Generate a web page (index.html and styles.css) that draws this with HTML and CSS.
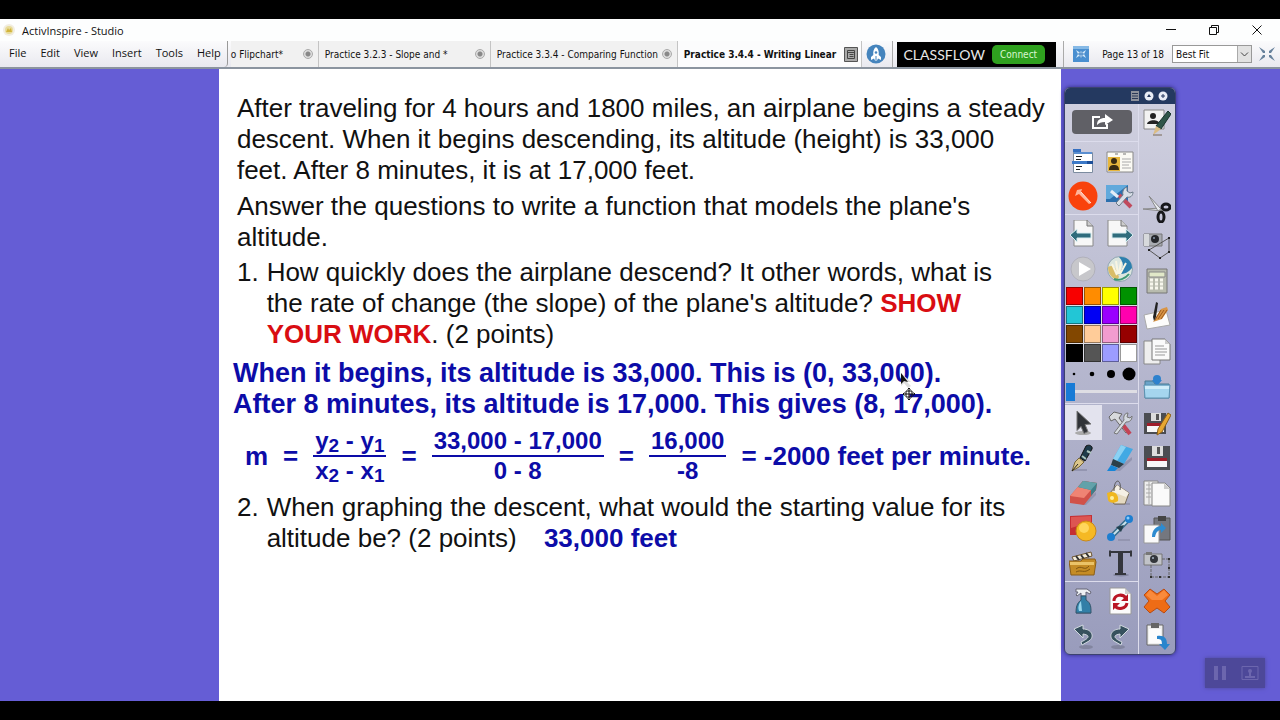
FILE: index.html
```html
<!DOCTYPE html>
<html lang="en">
<head>
    <meta charset="UTF-8">
    <meta name="viewport" content="width=device-width, initial-scale=1.0">
    <title>ActivInspire - Studio</title>
    <link rel="stylesheet" href="styles.css">
</head>
<body>
    <header class="titlebar">
        <svg class="app-logo" viewBox="0 0 14 14"><circle cx="7" cy="7" r="6" fill="#f1ede0"/><circle cx="7" cy="7" r="4" fill="#e8dc9a"/><path d="M4 9l2-4 1 2 2-2 1 4z" fill="#d2b43c"/></svg>
        <h1>ActivInspire - Studio</h1>
        <div class="window-buttons">
            <button aria-label="Minimize"><svg viewBox="0 0 12 12"><path d="M1 5.500h10" stroke="#111" fill="none"/></svg></button>
            <button aria-label="Restore"><svg viewBox="0 0 12 12"><path d="M1.500 3.500h7v7h-7zM3.500 3.500v-2h7v7h-2" stroke="#111" fill="none"/></svg></button>
            <button aria-label="Close"><svg viewBox="0 0 12 12"><path d="M1.500 1.500l9 9M10.500 1.500l-9 9" stroke="#111" fill="none"/></svg></button>
        </div>
    </header>

    <div class="toolbar">
        <nav class="menu">
            <button>File</button>
            <button>Edit</button>
            <button>View</button>
            <button>Insert</button>
            <button>Tools</button>
            <button>Help</button>
        </nav>
        <div class="tabs">
            <div class="tab tab-first"><a href="#">o Flipchart*</a><button class="tab-close" aria-label="Close tab"></button></div>
            <div class="tab tab-mid"><a href="#">Practice 3.2.3 - Slope and *</a><button class="tab-close" aria-label="Close tab"></button></div>
            <div class="tab tab-wide"><a href="#">Practice 3.3.4 - Comparing Function</a><button class="tab-close" aria-label="Close tab"></button></div>
            <div class="tab tab-active"><a href="#">Practice 3.4.4 - Writing Linear</a>
                <button class="tab-list" aria-label="Open flipcharts"><svg viewBox="0 0 14 15"><path d="M.5.5h13v14H.5z" fill="#a9a9a9" stroke="#555"/><path d="M3.500 3.500h7v8h-7zM4 5.500h6M5.500 7.500h4M5.500 9.500h4" fill="none" stroke="#444"/></svg></button>
            </div>
        </div>
        <button class="rocket" aria-label="Launch"><svg viewBox="0 0 20 20"><circle cx="10" cy="10" r="9.500" fill="#4584bd"/><path d="M10 3c2.500 2 3 4.500 2.700 8l2.300 2v3l-3-1.500-1 2h-2l-1-2L5 16v-3l2.300-2C7 7.500 7.500 5 10 3z" fill="#fff"/><circle cx="10" cy="8.500" r="1.300" fill="#4584bd"/><path d="M10 12v4" stroke="#4584bd"/></svg></button>
        <div class="classflow">
            <span>CLASSFLOW</span>
            <button>Connect</button>
        </div>
        <div class="page-tools">
            <button class="page-icon" aria-label="Page browser"><svg viewBox="0 0 16 16"><path d="M0 0h16v16H0z" fill="#4a8fd0"/><path d="M0 0h16v3H0z" fill="#86b9e6"/><path d="M3 4l3 2 2-1 2 1 3-2-2 4 2 4-3-2-2 2-2-2-3 2 2-4z" fill="#d8ecfb"/><path d="M7 5v7M9 5v7M5 8h6" stroke="#3d7fc0"/></svg></button>
            <span>Page 13 of 18</span>
            <label class="zoom">
                <select aria-label="Zoom"><option>Best Fit</option></select>
                <svg viewBox="0 0 14 16"><path d="M0 0h14v16H0z" fill="#e2e2e2"/><path d="M.5 0v16" stroke="#aaa"/><path d="M4 6.500l3.500 3.500L11 6.500" stroke="#444" fill="none"/></svg>
            </label>
            <button class="full-icon" aria-label="Exit full screen"><svg viewBox="0 0 16 16"><path d="M0 1l6 4v2H4zM16 1l-6 4v2h2zM0 15l6-4V9H4zM16 15l-6-4V9h2z" fill="#66809b"/></svg></button>
        </div>
    </div>

    <div class="workspace">
        <main class="flipchart">
            <p>After traveling for 4 hours and 1800 miles, an airplane begins a steady<br>descent. When it begins descending, its altitude (height) is 33,000<br>feet. After 8 minutes, it is at 17,000 feet.</p>
            <p>Answer the questions to write a function that models the plane's<br>altitude.</p>
            <div class="question">
                <span>1.</span>
                <p>How quickly does the airplane descend? It other words, what is<br>the rate of change (the slope) of the plane's altitude? <strong>SHOW<br>YOUR WORK</strong>. (2 points)</p>
            </div>
            <div class="answer">
                When it begins, its altitude is 33,000. This is (0, 33,000).<br>After 8 minutes, its altitude is 17,000. This gives (8, 17,000).
                <svg class="pointer" viewBox="0 0 18 28"><path d="M1 1v13l3-3 4 5 3-2-4-4h4z" fill="#ddd"/><path d="M1 1v11l3-3 4 1z" fill="#111"/><path d="M9 16v12M3 22h12M7.500 17.500L9 16l1.500 1.500M7.500 26.500L9 28l1.500-1.500M4.500 20.500L3 22l1.500 1.500M13.500 20.500L15 22l-1.500 1.500M6 19h6v6H6z" fill="none" stroke="#111"/></svg>
            </div>
            <div class="equation">
                <span>m</span>
                <span>=</span>
                <span class="fraction"><span>y<sub>2</sub> - y<sub>1</sub></span><span>x<sub>2</sub> - x<sub>1</sub></span></span>
                <span>=</span>
                <span class="fraction"><span>33,000 - 17,000</span><span>0 - 8</span></span>
                <span>=</span>
                <span class="fraction"><span>16,000</span><span>-8</span></span>
                <span>= -2000 feet per minute.</span>
            </div>
            <div class="question">
                <span>2.</span>
                <p>When graphing the descent, what would the starting value for its<br>altitude be? (2 points) <b>33,000 feet</b></p>
            </div>
        </main>

        <aside class="toolbox">
            <div class="toolbox-head">
                <button aria-label="Menu"><svg viewBox="0 0 10 10"><path d="M1 0h8v10H1z" fill="#8d929c"/><path d="M2 2.500h6M2 5h6M2 7.500h6" stroke="#2b3a58"/></svg></button>
                <button aria-label="Roll up"><svg viewBox="0 0 10 10"><circle cx="5" cy="5" r="4.500" fill="#e9edf5"/><path d="M3 6l2-3 2 3z" fill="#24365c"/></svg></button>
                <button aria-label="Pin"><svg viewBox="0 0 10 10"><circle cx="5" cy="5" r="4.500" fill="#e9edf5"/><path d="M5 3v4M3 5h4" stroke="#24365c"/></svg></button>
            </div>
            <div class="toolbox-body">
                <div class="tools-main">
                    <button class="share" aria-label="Share"><svg viewBox="0 0 22 16"><path d="M9 3H2v11h14v-4" fill="none" stroke="#fff" stroke-width="2"/><path d="M6 11c0-5 3-7 8-7V0l8 6-8 5V8c-4 0-6 1-8 3z" fill="#fff"/></svg></button>
                    <div class="tool-group">
                        <button aria-label="Main menu"><svg viewBox="0 0 28 28"><path d="M4 2h8v4H4z" fill="#356fc0"/><path d="M4.500 5.500h19v20h-19z" fill="#fff" stroke="#7c8ca0"/><path d="M5 5h18v2H5z" fill="#5b8fd0"/><path d="M7 9.500h6M7 12.500h5M7 19.500h6M7 22.500h4" stroke="#222"/><path d="M3 14h21v3H3z" fill="#3c79c8"/><path d="M18 14h6v3h-6z" fill="#1c4f99"/></svg></button>
                        <button aria-label="Profiles"><svg viewBox="0 0 28 28"><path d="M1 5h26v20H1z" fill="#fbfaf4" stroke="#888"/><path d="M2 10h12v14H2z" fill="#e7b63c"/><circle cx="8" cy="14" r="3" fill="#3a2b13"/><path d="M3 23c0-4 2-5 5-5s5 1 5 5z" fill="#3a2b13"/><path d="M16 12h9M16 15h9M16 18h7M16 21h9" stroke="#aaa"/><path d="M9 7h3M17 7h3" stroke="#777"/></svg></button>
                        <button aria-label="Annotate over desktop" class="big"><svg viewBox="0 0 30 30"><circle cx="15" cy="15" r="14.500" fill="#f9420c"/><path d="M7 15l2-6 5-1-1 3 10 11-2 1-10-10z" fill="#ffb49a"/><path d="M13 11l10 11" stroke="#ffe4da"/></svg></button>
                        <button aria-label="Desktop tools"><svg viewBox="0 0 28 28"><path d="M0 3h22v17H0z" fill="#2c70ae"/><path d="M0 3h22L4 17H0z" fill="#61a9dc"/><path d="M13 13l12 12" stroke="#c04a5c" stroke-width="4"/><path d="M10 21l7-8c-1-4 1-7 4-8v4l3 2 3-1c0 4-3 6-6 5l-8 9z" fill="#d8dfe7" stroke="#6c7a88"/><path d="M5 9l7 6" stroke="#e4edf6" stroke-width="3"/></svg></button>
                    </div>
                    <div class="tool-group">
                        <button aria-label="Previous page"><svg viewBox="0 0 28 28"><path d="M5 0h13l6 6v20H5z" fill="#f7f7f7" stroke="#888"/><path d="M18 0v6h6" fill="#ccc" stroke="#777"/><path d="M1 15l7-6v4h14v5H8v4z" fill="#2f6c7c" stroke="#d8edf0"/></svg></button>
                        <button aria-label="Next page"><svg viewBox="0 0 28 28"><path d="M2 0h13l6 6v20H2z" fill="#f7f7f7" stroke="#888"/><path d="M15 0v6h6" fill="#ccc" stroke="#777"/><path d="M27 15l-7-6v4H6v5h14v4z" fill="#2f6c7c" stroke="#d8edf0"/></svg></button>
                        <button aria-label="Play"><svg viewBox="0 0 28 28"><circle cx="14" cy="14" r="12" fill="#c7c7cb" stroke="#b1b1bb"/><path d="M10 7l12 7-12 7z" fill="#fff"/></svg></button>
                        <button aria-label="Express poll"><svg viewBox="0 0 28 28"><circle cx="14" cy="14" r="12.500" fill="#dce6df" stroke="#8fa5b2"/><path d="M13 2c9-1 13 5 13 11-4 5-9 7-16 6 7-4 10-9 3-17z" fill="#2c7fae"/><path d="M2 12c5-3 8 0 11 10l-2 3c-6-2-9-7-9-13z" fill="#d9bd68"/><path d="M6 9l5 11M10 6l2 13M15 7l-2 12M20 8l-6 11" stroke="#f8f5e2" stroke-width="2"/><path d="M8 24c5 2 11 0 15-5" stroke="#3d9873" stroke-width="2" fill="none"/></svg></button>
                    </div>
                    <div class="palette">
                        <button class="c-red" aria-label="Red"></button><button class="c-orange" aria-label="Orange"></button><button class="c-yellow" aria-label="Yellow"></button><button class="c-green" aria-label="Green"></button>
                        <button class="c-cyan" aria-label="Cyan"></button><button class="c-blue" aria-label="Blue"></button><button class="c-purple" aria-label="Purple"></button><button class="c-pink" aria-label="Pink"></button>
                        <button class="c-brown" aria-label="Brown"></button><button class="c-peach" aria-label="Peach"></button><button class="c-rose" aria-label="Rose"></button><button class="c-maroon" aria-label="Maroon"></button>
                        <button class="c-black" aria-label="Black"></button><button class="c-grey" aria-label="Grey"></button><button class="c-lilac" aria-label="Lilac"></button><button class="c-white" aria-label="White"></button>
                    </div>
                    <div class="widths">
                        <button aria-label="Width 1"><svg viewBox="0 0 18 18"><circle cx="9" cy="9" r="1.300"/></svg></button>
                        <button aria-label="Width 2"><svg viewBox="0 0 18 18"><circle cx="9" cy="9" r="2.300"/></svg></button>
                        <button aria-label="Width 3"><svg viewBox="0 0 18 18"><circle cx="9" cy="9" r="4"/></svg></button>
                        <button aria-label="Width 4"><svg viewBox="0 0 18 18"><circle cx="9" cy="9" r="6.500"/></svg></button>
                    </div>
                    <input class="slider" type="range" min="0" max="100" value="0" aria-label="Pen width">
                    <div class="tool-group">
                        <button class="selected" aria-label="Select"><svg viewBox="0 0 28 28"><ellipse cx="14" cy="24" rx="8" ry="2" fill="#aaa"/><path d="M8 2l14 13-6 .5 3 7-4 2-3-7-4 4z" fill="#303338" stroke="#777"/></svg></button>
                        <button aria-label="Tools"><svg viewBox="0 0 28 28"><path d="M3 8l5-5 8 2-3 4 10 13-3 2L9 10l-4 2z" fill="#d7d9dc" stroke="#666"/><path d="M17 16l7 9" stroke="#c34355" stroke-width="4"/><path d="M8 24L18 11c-1-4 1-7 4-7l-1 4 3 1 2-2c0 5-3 6-6 6L11 25z" fill="#d5dae0" stroke="#777"/></svg></button>
                        <button aria-label="Pen"><svg viewBox="0 0 28 28"><path d="M4 26h14" stroke="#9395b0" stroke-width="2"/><path d="M17 2c3-2 7 0 6 3l-7 12-5-3z" fill="#1e3a4a" stroke="#111"/><path d="M18 7l4 2M13 12l4 3" stroke="#a9c3bd" stroke-width="2"/><path d="M10 14l5 4-5 5-7 4 3-9z" fill="#dbc58a" stroke="#756438"/><path d="M3 27l6-7" stroke="#222"/></svg></button>
                        <button aria-label="Highlighter"><svg viewBox="0 0 28 28"><path d="M8 26.500L26 13v3L14 27z" fill="#9395b0"/><path d="M15 1l12 4-9 15-11-5z" fill="#42a9e4"/><path d="M15 1l5 2-9 14-4-2z" fill="#8bd1f3"/><path d="M7 15l11 5-5 4-8-3z" fill="#2b3f4a"/><path d="M5 21l7 3-3 3H1z" fill="#1686d8"/></svg></button>
                        <button aria-label="Eraser"><svg viewBox="0 0 28 28"><path d="M12 26L27 13v3L17 26z" fill="#9395b0"/><path d="M14 2l14 2-1 7-12 15-14-2v-7z" fill="#d15149"/><path d="M14 2l14 2-13 15-14-2z" fill="#ef8474"/><path d="M14 2l14 2-1 7-5 6v-6L9 8z" fill="#3e7f8a"/><path d="M14 2l14 2-6 7L9 8z" fill="#62a2aa"/></svg></button>
                        <button aria-label="Fill"><svg viewBox="0 0 28 28"><path d="M9 25h15" stroke="#9395b0" stroke-width="2"/><path d="M11 6l12 8-4 11H8L3 15z" fill="#e4d9c1" stroke="#766b58"/><path d="M11 6l12 8-3 4-13-5z" fill="#f5f0e5"/><path d="M8 12c0-14 8-12 6-1" fill="none" stroke="#555"/><path d="M1 14c8-3 12 2 11 8-4 3-9 2-10-1z" fill="#f0b71e"/><circle cx="6" cy="19" r="2" fill="#fff0a0"/></svg></button>
                        <button aria-label="Shape"><svg viewBox="0 0 28 28"><path d="M1 2l22-1v20H1z" fill="#c52e32"/><path d="M2 3l20-1v6L2 14z" fill="#dd5552"/><circle cx="17" cy="17" r="10" fill="#f5b924" stroke="#c98816"/><circle cx="15" cy="14" r="5" fill="#ffd75c"/></svg></button>
                        <button aria-label="Connector"><svg viewBox="0 0 28 28"><path d="M12 26h12" stroke="#9395b0" stroke-width="2"/><path d="M5 23L22 6" stroke="#356c8a" stroke-width="5"/><path d="M5 23L22 6" stroke="#c9e3ee" stroke-width="2"/><path d="M10 13l8-2-3 7z" fill="#25404e"/><circle cx="5" cy="23" r="4" fill="#1d7ed0"/><circle cx="23" cy="5" r="4" fill="#1d7ed0"/><circle cx="22" cy="4" r="1.500" fill="#8cccfa"/></svg></button>
                        <button aria-label="Insert media"><svg viewBox="0 0 28 28"><path d="M3 8l19-5 1 4-18 5z" fill="#f5eedd" stroke="#6d5530"/><path d="M7 7l3 4M12 6l3 4M17 4l3 4" stroke="#333" stroke-width="2"/><path d="M0 12h12l2-2h12l1 3-2 13H2z" fill="#c58c26" stroke="#8b5f18"/><path d="M1 13h24v3H1z" fill="#ebc368"/><path d="M7 20c6-5 8 3 13-3M7 23c5-3 8 2 14-3" stroke="#805612" fill="none"/></svg></button>
                        <button aria-label="Text"><svg viewBox="0 0 28 28"><ellipse cx="15" cy="26" rx="8" ry="1.500" fill="#82859f"/><path d="M3 3h23M4 1.500v6M25 1.500v6M9 25h11" stroke="#34363d" fill="none" stroke-width="2"/><path d="M14.500 3v21" stroke="#34363d" stroke-width="5"/></svg></button>
                    </div>
                    <div class="tool-group">
                        <button aria-label="Clear"><svg viewBox="0 0 28 28"><path d="M7 26h15" stroke="#777b98" stroke-width="2"/><path d="M7 2h11l4 3-1 2-4-2v4h-5V6L8 9 7 8l2-3H7z" fill="#eef1f4" stroke="#667"/><path d="M12 9h5v4c5 3 5 7 5 13H7c0-6 1-10 5-13z" fill="#327fa7" stroke="#35566b"/><path d="M12 14c-3 4-3 7-2 10h3z" fill="#98d7ed"/></svg></button>
                        <button aria-label="Reset page"><svg viewBox="0 0 28 28"><path d="M4 1h15l6 6v20H4z" fill="#fbfbfb" stroke="#999"/><path d="M19 1v6h6" fill="#ccc"/><path d="M8 14c0-6 8-8 12-3M21 16c-1 6-9 7-12 3" stroke="#b91524" stroke-width="3" fill="none"/><path d="M22 7v7h-7zM7 23v-7h7z" fill="#b91524"/></svg></button>
                        <button aria-label="Undo"><svg viewBox="0 0 28 28"><ellipse cx="17" cy="25" rx="7" ry="2" fill="#82859f"/><path d="M5 7l9-4v4c9 0 12 8 6 12l-7 4-1-3c9-4 9-7 2-8v4z" fill="#37515e" stroke="#d1d9df"/></svg></button>
                        <button aria-label="Redo"><svg viewBox="0 0 28 28"><ellipse cx="12" cy="25" rx="7" ry="2" fill="#82859f"/><path d="M23 7l-9-4v4C5 7 2 15 8 19l7 4 1-3c-9-4-9-7-2-8v4z" fill="#37515e" stroke="#d1d9df"/></svg></button>
                    </div>
                </div>

                <div class="tools-side">
                    <button aria-label="Desktop annotate"><svg viewBox="0 0 28 28"><path d="M1 2h20v19H1z" fill="#f2f2f2" stroke="#888"/><circle cx="10" cy="8" r="3" fill="#222"/><path d="M4 16c1-5 12-5 13 0z" fill="#222"/><path d="M25 3l3 3-10 15-5-3z" fill="#2f5549" stroke="#17322c"/><path d="M13 18l5 3-8 6z" fill="#dbbc83"/><path d="M10 27h9" stroke="#765"/></svg></button>
                    <button class="after-gap" aria-label="Cut"><svg viewBox="0 0 28 28"><path d="M0 14l19-1v3z" fill="#e8ebef" stroke="#888"/><path d="M6 1l12 13-3 2z" fill="#e8ebef" stroke="#888"/><ellipse cx="23" cy="12" rx="4" ry="3" fill="none" stroke="#17181b" stroke-width="3"/><ellipse cx="18" cy="22" rx="3" ry="5" fill="none" stroke="#17181b" stroke-width="3"/></svg></button>
                    <button aria-label="Camera area"><svg viewBox="0 0 28 28"><path d="M1 3h18v12H1z" fill="#a8abb1" stroke="#777"/><path d="M1 3h5v12H1z" fill="#d7d9dc"/><circle cx="12" cy="8" r="4" fill="#24262b"/><circle cx="11" cy="7" r="1" fill="#8999ad"/><path d="M6 19L26 7v14l-9 6z" fill="none" stroke="#555"/><path d="M5 18h2v2H5zM25 6h2v2h-2zM25 20h2v2h-2zM16 26h2v2h-2z" fill="#222"/></svg></button>
                    <button aria-label="Calculator"><svg viewBox="0 0 28 28"><path d="M4 2h20v24H4z" fill="#b8bbae" stroke="#777"/><path d="M6 5h16v5H6z" fill="#e1e8c8" stroke="#888"/><path d="M7 13h14M7 17h14M7 21h14" stroke="#f7f7ed" stroke-width="3" stroke-dasharray="3 2"/></svg></button>
                    <button aria-label="Handwriting"><svg viewBox="0 0 28 28"><path d="M1 13l22-5 4 15-23 4z" fill="#fcfcfc" stroke="#aaa"/><path d="M10 20l8-13 6-2 1 3-6 9z" fill="#d99545"/><path d="M18 8l-6 10M21 8l-6 9M24 8l-6 9" stroke="#9d5a20"/><path d="M13 0l2 1-2 14-2 4-1-4z" fill="#222"/></svg></button>
                    <button aria-label="Copy page"><svg viewBox="0 0 28 28"><path d="M1 3h16v23H1z" fill="#eee" stroke="#888"/><path d="M9 1h13l5 5v16H9z" fill="#fafafa" stroke="#777"/><path d="M22 1v5h5" fill="#ccc"/><path d="M12 8h9M12 11h12M12 14h12M12 17h10" stroke="#999"/></svg></button>
                    <button aria-label="Open"><svg viewBox="0 0 28 28"><path d="M2 8h8l2 3h14v14H2z" fill="#6ba4c9" stroke="#487891"/><circle cx="14" cy="6" r="4" fill="#2e82ce"/><path d="M9 7h10l-5 6z" fill="#2e82ce"/><path d="M1 12h26l-1 13H2z" fill="#a5d5ee" stroke="#5c92b1"/><path d="M2 13h24v3H2z" fill="#d0edf9"/></svg></button>
                    <button aria-label="Save as"><svg viewBox="0 0 28 28"><path d="M1 4h22v21H1z" fill="#4b4d52"/><path d="M8 4h10v8H8z" fill="#ddd"/><path d="M13 5h3v6h-3z" fill="#555"/><path d="M4 14h17v3H4z" fill="#9f1c29"/><path d="M4 17h17v6H4z" fill="#f7f7f7"/><path d="M25 4l3 2-9 17-5 3 1-6z" fill="#e8a731" stroke="#8b5f19"/></svg></button>
                    <button aria-label="Save"><svg viewBox="0 0 28 28"><path d="M1 2h26v24H1z" fill="#4b4d52"/><path d="M9 2h11v10H9z" fill="#ddd"/><path d="M14 3h3v7h-3z" fill="#555"/><path d="M4 14h20v3H4z" fill="#9f1c29"/><path d="M4 17h20v6H4z" fill="#f7f7f7"/></svg></button>
                    <button aria-label="Duplicate page"><svg viewBox="0 0 28 28"><path d="M1 1h14v24H1z" fill="#eee" stroke="#888"/><path d="M3 5h5M3 9h5M3 13h5M3 17h5M6 2v22" stroke="#aaa"/><path d="M9 3h13l5 5v18H9z" fill="#fafafa" stroke="#888"/><path d="M21 3v6h6z" fill="#ccc"/></svg></button>
                    <button aria-label="Paste"><svg viewBox="0 0 28 28"><path d="M11 2h16v22H11z" fill="#74777f" stroke="#555"/><path d="M15 0h8v5h-8z" fill="#444"/><path d="M1 9h15v18H1z" fill="#fafafa" stroke="#999"/><path d="M9 21c0-7 4-11 9-11V7l5 5-5 5v-3c-3 0-5 2-6 7z" fill="#2d8bd0"/></svg></button>
                    <button aria-label="Camera snapshot"><svg viewBox="0 0 28 28"><path d="M1 3h18v11H1z" fill="#c1c3c8" stroke="#777"/><path d="M3 1h6v3H3z" fill="#777"/><circle cx="11" cy="8" r="4" fill="#33363b"/><circle cx="10" cy="7" r="1" fill="#a9b6c5"/><path d="M19 8h7v18H8V14" fill="none" stroke="#666" stroke-dasharray="3 1"/><path d="M7 25h2v2H7zM16 25h2v2h-2zM25 25h2v2h-2zM25 7h2v2h-2zM25 16h2v2h-2z" fill="#333"/></svg></button>
                    <button aria-label="Delete"><svg viewBox="0 0 28 28"><path d="M7 2l7 5 7-5 6 6-5 6 5 6-6 6-7-5-7 5-6-6 5-6-5-6z" fill="#ee6c16" stroke="#b84b13"/><path d="M7 3l7 6 7-6 4 5-6 5H9L3 8z" fill="#f98a3c"/></svg></button>
                    <button aria-label="Paste to new page"><svg viewBox="0 0 28 28"><path d="M4 3h16v20H4z" fill="#eee" stroke="#666"/><path d="M8 1h8v5H8z" fill="#666"/><path d="M6 7h12v14H6z" fill="#fcfcfc"/><path d="M14 14c7-1 10 2 10 8h3l-5 6-6-6h3c0-4-1-5-5-5z" fill="#2985cd"/></svg></button>
                </div>
            </div>
        </aside>

        <div class="recorder">
            <button aria-label="Pause"><svg viewBox="0 0 18 18"><path d="M3 2h4v14H3zM11 2h4v14h-4z" fill="#6c66ae"/></svg></button>
            <button aria-label="Camera"><svg viewBox="0 0 18 18"><path d="M1 2.500h16v13H1z" fill="none" stroke="#6c66ae"/><circle cx="9" cy="7" r="2" fill="#6c66ae"/><path d="M8 8h2v4h4v2H4v-2h4z" fill="#6c66ae"/></svg></button>
        </div>
    </div>
</body>
</html>
```
FILE: styles.css
```css
* {
    box-sizing: border-box;
}

body {
    display: flex;
    flex-direction: column;
    min-height: 100vh;
    margin: 0;
    padding: 19px 0;
    background-color: #000;
    color: #111;
    font-family: "Open Sans", "Noto Sans", sans-serif;
    font-size: 11px;
}

button {
    margin: 0;
    padding: 0;
    border: 0;
    background: none;
    color: inherit;
    font: inherit;
}

svg {
    display: block;
}

p {
    margin: 0;
}

/* Title bar */
.titlebar {
    display: flex;
    align-items: center;
    height: 22px;
    padding-left: 2px;
    background-color: #fdfefe;
}

.titlebar h1 {
    margin: 0 auto 0 6px;
    font-size: 11px;
    font-weight: 400;
}

.app-logo {
    width: 14px;
    height: 14px;
}

.window-buttons {
    display: flex;
    gap: 31px;
    padding-right: 17px;
}

.window-buttons svg {
    width: 12px;
    height: 12px;
}

/* Menu, tabs and page controls */
.toolbar {
    display: flex;
    height: 28px;
    background: linear-gradient(#fbfbfc, #e9e9ef);
    border-bottom: 2px solid #8b949f;
}

.menu {
    display: flex;
    align-items: center;
    gap: 14px;
    padding: 0 6px 3px 9px;
    border-right: 1px solid #999;
    border-radius: 0 0 4px 0;
}

.tabs {
    display: flex;
    flex: 1;
    min-width: 0;
    margin-left: 3px;
    font-family: "DejaVu Sans Condensed", "DejaVu Sans", sans-serif;
    font-size: 10px;
}

.tab {
    display: flex;
    align-items: center;
    justify-content: space-between;
    padding: 0 5px 0 6px;
    border-right: 1px solid #c4c4c4;
    background-color: #f1f1f1;
}

.tab a {
    color: inherit;
    text-decoration: none;
    white-space: nowrap;
}

.tab-first {
    flex: 0 1 88px;
    padding-left: 0;
}

.tab-mid {
    flex: 0 1 172px;
}

.tab-wide {
    flex: 0 1 187px;
}

.tab-active {
    flex: 1;
    padding-right: 3px;
    background-color: #fcfcfd;
    font-weight: bold;
}

.tab-close {
    flex: none;
    width: 10px;
    height: 10px;
    border: 1px solid #aaa;
    border-radius: 50%;
    background: radial-gradient(#888 2px, #ddd 3px);
}

.tab-list svg {
    width: 14px;
    height: 15px;
}

.rocket {
    padding: 0 6px 0 4px;
    border-right: 1px solid #aaa;
}

.rocket svg {
    width: 20px;
    height: 20px;
}

.classflow {
    display: flex;
    align-items: center;
    gap: 7px;
    height: 25px;
    margin: 1px 7px 0 4px;
    padding: 0 11px 0 7px;
    background-color: #000;
    color: #e8e8e8;
    font-family: Lato, sans-serif;
    font-size: 14px;
}

.classflow button {
    padding: 0 8px;
    border-radius: 5px;
    background-color: #2fa11f;
    color: #d9f7d0;
    font-family: "DejaVu Sans Condensed", "DejaVu Sans", sans-serif;
    font-size: 10px;
    line-height: 19px;
}

.page-tools {
    display: flex;
    align-items: center;
    padding: 0 5px 0 9px;
    border-left: 1px solid #aaa;
    font-family: "DejaVu Sans Condensed", "DejaVu Sans", sans-serif;
    font-size: 10px;
    white-space: nowrap;
}

.page-icon {
    margin-right: 13px;
}

.page-icon svg,
.full-icon svg {
    width: 16px;
    height: 16px;
}

.zoom {
    display: grid;
    width: 80px;
    margin: 0 7px 0 8px;
    border: 1px solid #999;
    background-color: #fff;
}

.zoom select {
    grid-area: 1 / 1;
    height: 16px;
    padding: 0 3px;
    border: 0;
    appearance: none;
    background: none;
    color: inherit;
    font: inherit;
}

.zoom svg {
    grid-area: 1 / 1;
    justify-self: end;
    width: 14px;
    height: 16px;
    pointer-events: none;
}

/* Flipchart page */
.workspace {
    position: relative;
    display: grid;
    flex: 1;
    grid-template-columns: 13fr 50fr 13fr;
    background-color: #655dd5;
}

.flipchart {
    grid-column: 2;
    padding: 24px 0 0 18px;
    background-color: #fff;
    font-family: "Liberation Sans", Arial, sans-serif;
    font-size: 26px;
    line-height: 31px;
    white-space: nowrap;
}

.flipchart > p {
    margin-bottom: 5px;
}

.flipchart > p + p {
    margin-bottom: 4px;
}

.question {
    display: flex;
    gap: 8px;
}

.question strong {
    color: #d90d12;
}

.question b {
    margin-left: 20px;
}

.question b,
.answer,
.equation {
    color: #0c0ca8;
    font-weight: bold;
}

.answer {
    position: relative;
    margin: 8px 0 7px -4px;
    font-size: 27px;
}

.pointer {
    position: absolute;
    top: 14px;
    left: 667px;
    width: 18px;
    height: 28px;
}

.equation {
    display: flex;
    align-items: center;
    gap: 15px;
    margin: 0 0 7px 8px;
}

.fraction {
    font-size: 24px;
    line-height: 28px;
    text-align: center;
}

.fraction > span {
    display: block;
    padding: 0 2px;
}

.fraction > span:first-child {
    border-bottom: 2px solid #0c0ca8;
}

.fraction sub {
    font-size: 19px;
    line-height: 0;
    vertical-align: -3px;
}

/* Floating toolbox */
.toolbox {
    align-self: start;
    width: 112px;
    margin: 18px 0 0 3px;
    border: 1px solid #3c4270;
    border-radius: 6px;
    background: linear-gradient(#d1d1e0, #999cbc);
    box-shadow: 0 0 4px #2f2b80;
    overflow: hidden;
}

.toolbox-head {
    display: flex;
    align-items: center;
    justify-content: flex-end;
    gap: 4px;
    height: 16px;
    padding-right: 7px;
    background-color: #243960;
}

.toolbox-head svg {
    width: 10px;
    height: 10px;
}

.toolbox-body {
    display: flex;
}

.tools-main {
    width: 74px;
    border-right: 1px solid #dcdcec;
}

.tools-main svg,
.tools-side svg {
    width: 28px;
    height: 28px;
}

.tools-main .share {
    display: flex;
    align-items: center;
    justify-content: center;
    width: 60px;
    height: 24px;
    margin: 6px 7px 7px;
    border-radius: 4px;
    background-color: #606066;
}

.tools-main .share svg {
    width: 22px;
    height: 16px;
}

.tool-group {
    display: grid;
    grid-template-columns: 1fr 1fr;
    grid-auto-rows: 35px;
    padding: 1px 0;
    border-top: 1px solid #dcdcec;
}

.tool-group button,
.tools-side button {
    display: flex;
    align-items: center;
    justify-content: center;
}

.tool-group .big svg {
    width: 30px;
    height: 30px;
}

.tool-group .selected {
    background-color: #e3e3ee;
}

.palette {
    display: grid;
    grid-template-columns: repeat(4, 1fr);
    grid-auto-rows: 18px;
    gap: 1px;
    margin: 0 1px;
    background-color: #dedee6;
}

.palette button {
    border: 1px solid rgba(0, 0, 0, 0.4);
}

.c-red { background-color: #f80000; }
.c-orange { background-color: #ff8c00; }
.c-yellow { background-color: #ffff00; }
.c-green { background-color: #009200; }
.c-cyan { background-color: #22c6d6; }
.c-blue { background-color: #0000f4; }
.c-purple { background-color: #9a00ff; }
.c-pink { background-color: #ff00ae; }
.c-brown { background-color: #824700; }
.c-peach { background-color: #ffcc99; }
.c-rose { background-color: #f29ccf; }
.c-maroon { background-color: #960000; }
.c-black { background-color: #000; }
.c-grey { background-color: #555; }
.c-lilac { background-color: #9c9cff; }
.c-white { background-color: #fff; }

.widths {
    display: grid;
    grid-template-columns: repeat(4, 1fr);
    padding: 3px 0 0;
}

.tools-main .widths svg {
    width: 18px;
    height: 18px;
}

.slider {
    display: block;
    width: 71px;
    height: 18px;
    margin: 0 1px 2px;
    appearance: none;
    background: linear-gradient(transparent 7px, #dedee4 7px, #dedee4 10px, transparent 10px);
}

.slider::-webkit-slider-thumb {
    width: 9px;
    height: 18px;
    appearance: none;
    background-color: #187bd6;
}

.tools-side {
    display: flex;
    flex: 1;
    flex-direction: column;
}

.tools-side button {
    flex: 1;
}

.tools-side .after-gap {
    margin-top: 52px;
}

/* Screen recorder controls */
.recorder {
    position: absolute;
    right: 15px;
    bottom: 13px;
    display: flex;
    gap: 12px;
    padding: 6px;
    background-color: #4d4899;
    box-shadow: 0 0 4px #4d4899;
}

.recorder svg {
    width: 18px;
    height: 18px;
}
```
